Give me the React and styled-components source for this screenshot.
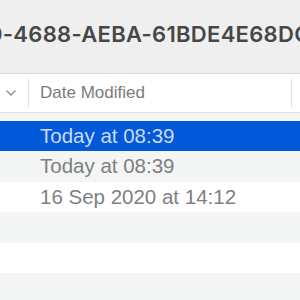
import styled, { createGlobalStyle } from 'styled-components';

const GlobalStyle = createGlobalStyle`
  html, body {
    margin: 0;
    padding: 0;
    background: #f4f5f5;
    overflow: hidden;
  }
`;

const Window = styled.div`
  width: 300px;
  height: 300px;
  overflow: hidden;
  display: flex;
  flex-direction: column;
  background: #f4f5f5;
`;

const TitleBar = styled.div`
  height: 73px;
  flex-shrink: 0;
  display: flex;
  align-items: center;
  background: #efefef;
  border-bottom: 1px solid #d9d9d9;
  overflow: hidden;
  white-space: nowrap;
`;

const Title = styled.span`
  margin-left: -12px;
  margin-top: -5px;
  font-family: Inter, "Liberation Sans", sans-serif;
  font-weight: 600;
  font-size: 22px;
  letter-spacing: 0.3px;
  color: #474747;
`;

const HeaderRow = styled.div`
  height: 38px;
  flex-shrink: 0;
  display: flex;
  align-items: center;
  background: #ffffff;
  border-bottom: 1px solid #dedede;
`;

const SortCell = styled.div`
  width: 28px;
  height: 100%;
  display: flex;
  align-items: center;
  padding-left: 5px;
  box-sizing: border-box;
`;

const Divider = styled.div`
  width: 1px;
  height: 28px;
  background: #e0e0e0;
  flex-shrink: 0;
`;

const HeaderLabel = styled.div`
  flex: 1;
  padding-left: 11px;
  font-family: "Liberation Sans", Arial, sans-serif;
  font-size: 17px;
  color: #7b7b7b;
`;

const Spacer = styled.div`
  height: 7.5px;
  flex-shrink: 0;
`;

const Row = styled.div`
  height: 30.5px;
  flex-shrink: 0;
  display: flex;
  align-items: center;
  padding-left: 40px;
  font-family: "Liberation Sans", Arial, sans-serif;
  font-size: 20.5px;
  background: ${p => (p.$selected ? '#0458da' : p.$odd ? '#f4f5f5' : '#ffffff')};
  color: ${p => (p.$selected ? '#c9dbf7' : '#7f7f7f')};
`;

const Chevron = () => (
  <svg width="12" height="8" viewBox="0 0 12 8">
    <polyline points="1.5,1.5 6,6 10.5,1.5" fill="none" stroke="#8c8c8c" strokeWidth="1.3" />
  </svg>
);

const rows = [
  { text: 'Today at 08:39', selected: true },
  { text: 'Today at 08:39' },
  { text: '16 Sep 2020 at 14:12' },
  { text: '' },
  { text: '' },
  { text: '' },
];

export default function App() {
  return (
    <>
      <GlobalStyle />
      <Window>
        <TitleBar>
          <Title>0-4688-AEBA-61BDE4E68DC8</Title>
        </TitleBar>
        <HeaderRow>
          <SortCell><Chevron /></SortCell>
          <Divider />
          <HeaderLabel>Date Modified</HeaderLabel>
          <Divider />
          <div style={{ width: 8 }} />
        </HeaderRow>
        <Spacer />
        {rows.map((r, i) => (
          <Row key={i} $selected={r.selected} $odd={i % 2 === 1}>{r.text}</Row>
        ))}
      </Window>
    </>
  );
}
